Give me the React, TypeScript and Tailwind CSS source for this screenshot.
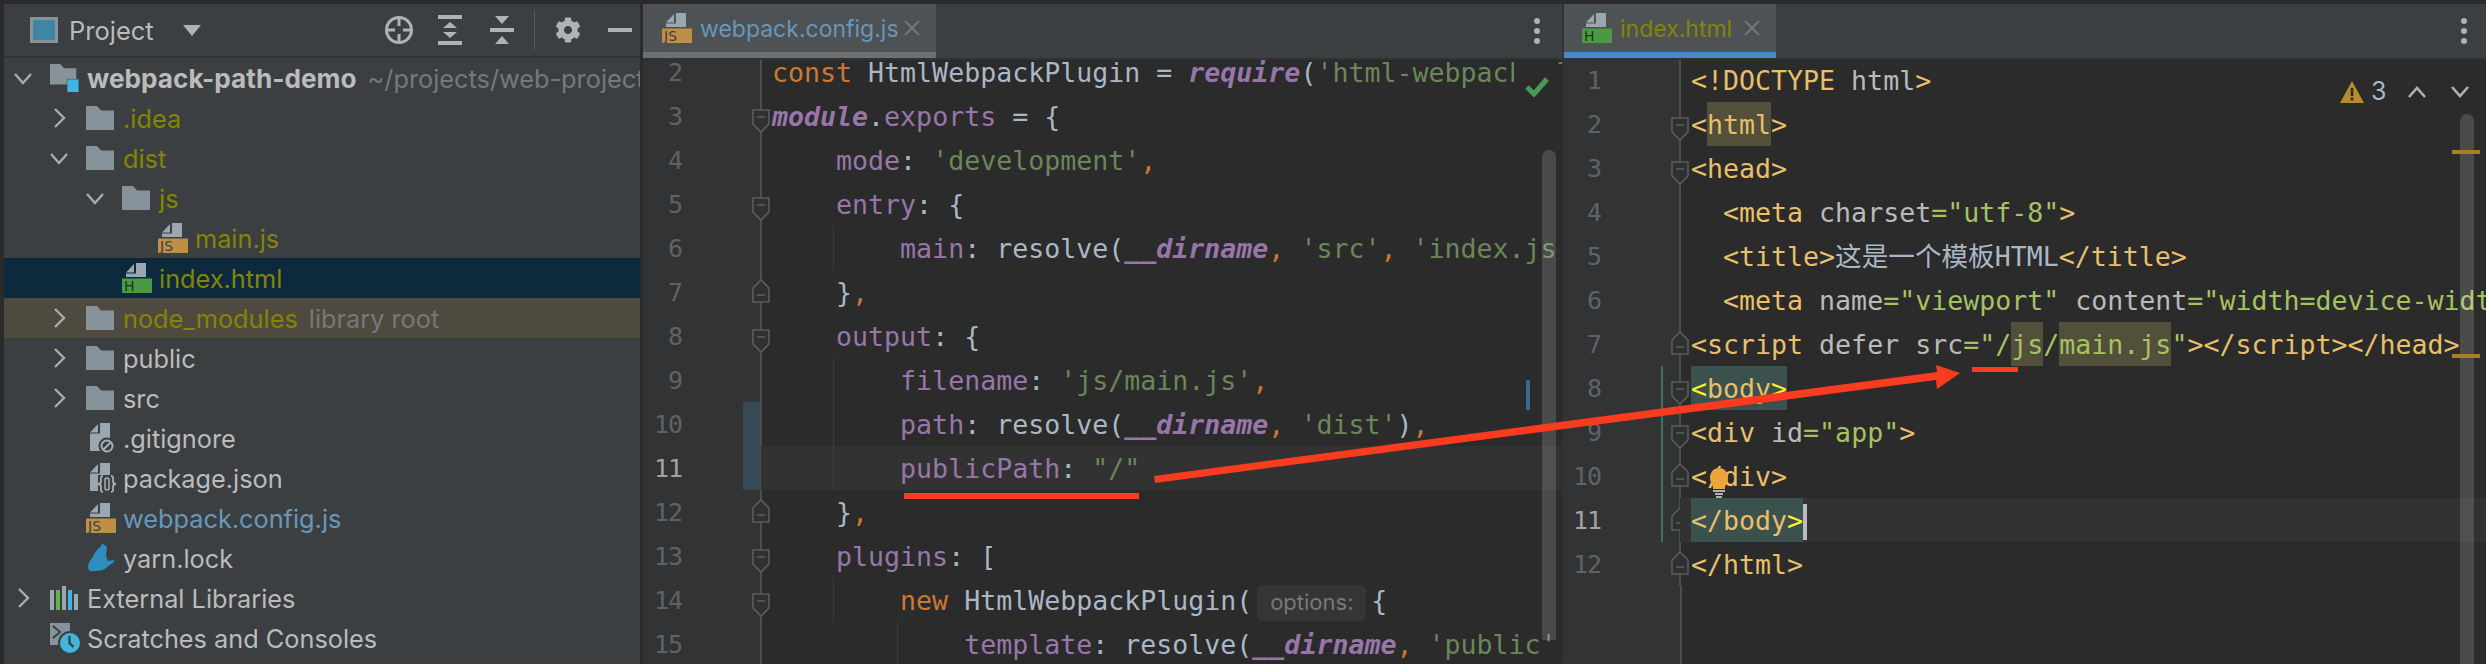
import React from "react";
import { FaCog } from "react-icons/fa";

const MONO = "font-['DejaVu_Sans_Mono','Noto_Sans_CJK_SC',monospace]";
const UI = "font-['Inter','Noto_Sans',sans-serif]";

/* ---------- small icons ---------- */
const Chevron = ({ open, className = "" }: { open: boolean; className?: string }) => (
  <svg width="24" height="24" viewBox="0 0 24 24" className={className} fill="none" stroke="#a9acae" strokeWidth="2.4">
    {open ? <path d="M4 8l8 9 8-9" /> : <path d="M8 3l9 9-9 9" />}
  </svg>
);

const Folder = () => (
  <svg width="30" height="24" viewBox="0 0 30 24" fill="#87939a">
    <path d="M0 0h11l4 4.500h13V24H0z" />
  </svg>
);

const RootFolder = () => (
  <svg width="32" height="30" viewBox="0 0 32 30">
    <path d="M0 0h11l4 4.500h13V22H0z" fill="#87939a" />
    <rect x="18" y="16" width="12" height="14" fill="#3c3f41" />
    <rect x="18.500" y="16.500" width="12" height="13.500" fill="#40b6e0" />
  </svg>
);

const FILE_TOP = "M4 9.500L12 1v8.500zM14 0h10v14H4v-3.500h10z";

const BadgeFile = ({ label, bg, fg }: { label: string; bg: string; fg: string }) => (
  <svg width="30" height="30" viewBox="0 0 30 30">
    <path d={FILE_TOP} fill="#9aa7b0" />
    <rect x="0" y="15.500" width="30" height="14.500" fill={bg} />
    <text x="2" y="28" fontSize="14" fontFamily="'DejaVu Sans',sans-serif" fill={fg}>{label}</text>
  </svg>
);
const JsFile = () => <BadgeFile label="JS" bg="#bf8f47" fg="#3c3f41" />;
const HtmlFile = () => <BadgeFile label="H" bg="#4a9a44" fg="#23301f" />;

const LightFile = () => (
  <path d="M4 9.500L12 1v8.500zM14 0h10v28H4V10.500h10z" fill="#9aa7b0" />
);

const GitIgnore = () => (
  <svg width="30" height="30" viewBox="0 0 30 30">
    <LightFile />
    <circle cx="21" cy="23" r="8.500" fill="#3c3f41" />
    <circle cx="21" cy="23" r="5.500" fill="none" stroke="#a5b0b8" strokeWidth="2" />
    <path d="M17 27l8-8" stroke="#a5b0b8" strokeWidth="2" />
  </svg>
);

const JsonFile = () => (
  <svg width="30" height="30" viewBox="0 0 30 30">
    <LightFile />
    <rect x="12" y="12" width="18" height="18" fill="#3c3f41" />
    <path d="M17 13c-3 0-2 3-2 5 0 2-1 3-3 3 2 0 3 1 3 3 0 2-1 5 2 5M25 13c3 0 2 3 2 5 0 2 1 3 3 3-2 0-3 1-3 3 0 2 1 5-2 5" fill="none" stroke="#a5b0b8" strokeWidth="1.800" />
    <rect x="19" y="15" width="4" height="12" rx="2" fill="none" stroke="#a5b0b8" strokeWidth="1.500" />
  </svg>
);

const Yarn = () => (
  <svg width="30" height="30" viewBox="0 0 30 30">
    <path
      d="M16 0l2 2c2 0 3 2 3 4 0 2-1 3-1 5 0 3 1 5 2 7 2 0 4-1 6-1 1 1 0 2-1 3-3 2-5 3-8 6-2 1-6 2-10 2-4 1-7 0-7-4 0-4 2-6 4-9 2-3 3-6 5-8 2-2 4-3 5-7z"
      fill="#2e8fbf"
    />
  </svg>
);

const Libs = () => (
  <svg width="30" height="24" viewBox="0 0 30 24">
    <rect x="0" y="4" width="4" height="20" fill="#9aa7b0" />
    <rect x="6" y="4" width="4" height="20" fill="#62b543" />
    <rect x="12" y="0" width="4" height="24" fill="#9aa7b0" />
    <rect x="18" y="4" width="4" height="20" fill="#40b6e0" />
    <rect x="24" y="8" width="4" height="16" fill="#9aa7b0" />
  </svg>
);

const Scratches = () => (
  <svg width="30" height="30" viewBox="0 0 30 30">
    <path d="M0 0h20v22H0z" fill="#87939a" />
    <path d="M3 3l7 6-7 6" fill="none" stroke="#3c3f41" strokeWidth="2" />
    <circle cx="20" cy="20" r="12" fill="#3c3f41" />
    <circle cx="20" cy="20" r="10" fill="#40b6e0" />
    <path d="M19.500 13v7l4 4" fill="none" stroke="#3c3f41" strokeWidth="2.400" />
  </svg>
);

const Kebab = () => (
  <div className="flex flex-col gap-[4px]">
    <span className="w-[6px] h-[6px] rounded-full bg-[#afb1b3]" />
    <span className="w-[6px] h-[6px] rounded-full bg-[#afb1b3]" />
    <span className="w-[6px] h-[6px] rounded-full bg-[#afb1b3]" />
  </div>
);

const CloseX = () => (
  <svg width="16" height="14" viewBox="0 0 16 14" stroke="#7c7f81" strokeWidth="1.700">
    <path d="M1 0l14 14M15 0L1 14" />
  </svg>
);

/* fold marks in the gutter */
const FoldOpen = () => (
  <svg width="18" height="24" viewBox="0 0 18 24" fill="#2e3032" stroke="#5a5c5e" strokeWidth="1.600">
    <path d="M1 1h16v14l-8 8-8-8z" />
    <path d="M5 8h8" />
  </svg>
);
const FoldClose = () => (
  <svg width="18" height="24" viewBox="0 0 18 24" fill="#2e3032" stroke="#5a5c5e" strokeWidth="1.600">
    <path d="M1 23V9l8-8 8 8v14z" />
    <path d="M5 16h8" />
  </svg>
);

/* ---------- code tokens ---------- */
type Seg = [string, string];
const P = "text-[#9876aa]";
const BI = "text-[#9876aa] font-bold italic";
const O = "text-[#cc7832]";
const W = "text-[#a9b7c6]";
const G = "text-[#6a8759]";
const T = "text-[#e8bf6a]";
const A = "text-[#bababa]";
const V = "text-[#a5c261]";
const Y = "text-[#ffef28]";

type Line = {
  n: number;
  segs: React.ReactNode;
  fold?: "open" | "close";
  guide?: "a" | "b";
  current?: boolean;
  change?: boolean;
  green?: boolean;
};

const S = (segs: Seg[]) => (
  <>
    {segs.map(([c, t], i) => (
      <span key={i} className={c}>{t}</span>
    ))}
  </>
);

const left: Line[] = [
  { n: 2, segs: S([[O, "const "], [W, "HtmlWebpackPlugin = "], [BI, "require"], [W, "("], [G, "'html-webpack-plugin'"], [W, ")"]]) },
  { n: 3, fold: "open", segs: S([[BI, "module"], [W, "."], [P, "exports"], [W, " = {"]]) },
  { n: 4, segs: S([[W, "    "], [P, "mode"], [W, ": "], [G, "'development'"], [O, ","]]) },
  { n: 5, fold: "open", segs: S([[W, "    "], [P, "entry"], [W, ": {"]]) },
  { n: 6, guide: "a", segs: S([[W, "        "], [P, "main"], [W, ": resolve("], [BI, "__dirname"], [O, ", "], [G, "'src'"], [O, ", "], [G, "'index.js'"], [W, ")"]]) },
  { n: 7, fold: "close", segs: S([[W, "    }"], [O, ","]]) },
  { n: 8, fold: "open", segs: S([[W, "    "], [P, "output"], [W, ": {"]]) },
  { n: 9, guide: "a", segs: S([[W, "        "], [P, "filename"], [W, ": "], [G, "'js/main.js'"], [O, ","]]) },
  { n: 10, guide: "a", change: true, segs: S([[W, "        "], [P, "path"], [W, ": resolve("], [BI, "__dirname"], [O, ", "], [G, "'dist'"], [W, ")"], [O, ","]]) },
  { n: 11, guide: "a", change: true, current: true, segs: S([[W, "        "], [P, "publicPath"], [W, ": "], [G, '"/"']]) },
  { n: 12, fold: "close", segs: S([[W, "    }"], [O, ","]]) },
  { n: 13, fold: "open", segs: S([[W, "    "], [P, "plugins"], [W, ": ["]]) },
  {
    n: 14,
    fold: "open",
    guide: "a",
    segs: (
      <>
        {S([[W, "        "], [O, "new "], [W, "HtmlWebpackPlugin("]])}
        <span className={`${UI} inline-block w-[109px] h-[36px] mx-[5px] rounded-[6px] bg-[#353535] text-[#787878] text-[22px] leading-[34px] text-center align-middle`}>options:</span>
        {S([[W, "{"]])}
      </>
    ),
  },
  { n: 15, guide: "b", segs: S([[W, "            "], [P, "template"], [W, ": resolve("], [BI, "__dirname"], [O, ", "], [G, "'public'"], [O, ","]]) },
];

const right: Line[] = [
  { n: 1, segs: S([[T, "<!DOCTYPE "], [A, "html"], [T, ">"]]) },
  { n: 2, fold: "open", segs: (<>{S([[T, "<"]])}<span className={`${T} bg-[#52503a] inline-block h-[44px]`}>html</span>{S([[T, ">"]])}</>) },
  { n: 3, fold: "open", segs: S([[T, "<head>"]]) },
  { n: 4, segs: S([[T, "  <meta "], [A, "charset"], [V, '="utf-8"'], [T, ">"]]) },
  { n: 5, segs: S([[T, "  <title>"], [W, "这是一个模板HTML"], [T, "</title>"]]) },
  { n: 6, segs: S([[T, "  <meta "], [A, "name"], [V, '="viewport" '], [A, "content"], [V, '="width=device-width, initial-scale=1"'], [T, ">"]]) },
  {
    n: 7,
    fold: "close",
    segs: (
      <>
        {S([[T, "<script "], [A, "defer src"], [V, '="/']])}
        <span className={`${V} bg-[#52503a] inline-block h-[44px]`}>js</span>
        {S([[V, "/"]])}
        <span className={`${V} bg-[#52503a] inline-block h-[44px]`}>main.js</span>
        {S([[V, '"'], [T, "></script></head>"]])}
      </>
    ),
  },
  {
    n: 8,
    fold: "open",
    green: true,
    segs: (
      <span className="bg-[#3b514d] inline-block h-[44px]">{S([[Y, "<"], [T, "body"], [Y, ">"]])}</span>
    ),
  },
  { n: 9, fold: "open", green: true, segs: S([[T, "<div "], [A, "id"], [V, '="app"'], [T, ">"]]) },
  { n: 10, fold: "close", green: true, segs: S([[T, "</div>"]]) },
  {
    n: 11,
    fold: "close",
    green: true,
    current: true,
    segs: (
      <>
        <span className="bg-[#3b514d] inline-block h-[44px]">{S([[T, "</body"], [Y, ">"]])}</span>
        <span className="inline-block w-[4px] h-[36px] bg-[#bbbbbb] align-middle -mt-[2px]" />
      </>
    ),
  },
  { n: 12, fold: "close", segs: S([[T, "</html>"]]) },
];

const EditorLine = ({ l, side }: { l: Line; side: "l" | "r" }) => (
  <div className="flex h-[44px] shrink-0 relative">
    <div className={`${side === "l" ? "w-[39px]" : "w-[37px]"} shrink-0 bg-[#313335] text-right leading-[46px] ${l.current ? "text-[#a4a3a3]" : "text-[#606366]"} ${MONO} text-[25px] tracking-[-1px]`}>
      {l.n}
    </div>
    <div className="w-[79px] shrink-0 relative bg-[#313335]">
      {l.change && <span className="absolute right-0 top-0 bottom-0 w-[18px] bg-[#374955]" />}
      {l.green && <span className="absolute right-[17px] top-0 bottom-0 w-[2px] bg-[#447152]" />}
      <span className="absolute right-[-1px] top-0 bottom-0 w-[2px] bg-[#4c4e50]" />
      {l.fold === "open" && (
        <span className="absolute right-[-9px] top-[15px]"><FoldOpen /></span>
      )}
      {l.fold === "close" && (
        <span className="absolute right-[-9px] top-[9px]"><FoldClose /></span>
      )}
    </div>
    <div
      className={`flex-1 min-w-0 relative whitespace-pre overflow-hidden pl-[11px] leading-[46px] text-[26.6px] ${MONO} ${l.current ? "bg-[#323232]" : ""}`}
    >
      {l.guide === "a" && <span className="absolute left-[72px] top-0 bottom-0 w-[1px] bg-[#3d3d3d]" />}
      {l.guide === "b" && <span className="absolute left-[136px] top-0 bottom-0 w-[1px] bg-[#3d3d3d]" />}
      {l.segs}
    </div>
  </div>
);

const Tab = ({ w, pl, icon, name, cls, bar }: { w: string; pl: string; icon: React.ReactNode; name: string; cls: string; bar: string }) => (
  <div className={`${w} h-[54px] shrink-0 bg-[#4e5254] flex flex-col`}>
    <div className={`flex items-center flex-1 ${pl}`}>
      <span className="w-[30px] h-[30px] mr-[8px]">{icon}</span>
      <span className={`${UI} text-[23px] pt-[2px] ${cls}`}>{name}</span>
      <span className="ml-auto mr-[16px]"><CloseX /></span>
    </div>
    <div className={`h-[6px] ${bar}`} />
  </div>
);

const treeRows: {
  pl: string; chev?: "open" | "closed"; icon: React.ReactNode; label: string; cls: string; extra?: string; bold?: boolean; row?: string;
}[] = [
  { pl: "pl-[7px]", chev: "open", icon: <RootFolder />, label: "webpack-path-demo", cls: "text-[#bbbbbb]", bold: true, extra: "~/projects/web-projects/webpack-path-demo" },
  { pl: "pl-[43px]", chev: "closed", icon: <Folder />, label: ".idea", cls: "text-[#848504]" },
  { pl: "pl-[43px]", chev: "open", icon: <Folder />, label: "dist", cls: "text-[#848504]" },
  { pl: "pl-[79px]", chev: "open", icon: <Folder />, label: "js", cls: "text-[#848504]" },
  { pl: "pl-[115px]", icon: <JsFile />, label: "main.js", cls: "text-[#848504]" },
  { pl: "pl-[79px]", icon: <HtmlFile />, label: "index.html", cls: "text-[#848504]", row: "bg-[#0d293e]" },
  { pl: "pl-[43px]", chev: "closed", icon: <Folder />, label: "node_modules", cls: "text-[#848504]", extra: "library root", row: "bg-[#4e4a40]" },
  { pl: "pl-[43px]", chev: "closed", icon: <Folder />, label: "public", cls: "text-[#bbbbbb]" },
  { pl: "pl-[43px]", chev: "closed", icon: <Folder />, label: "src", cls: "text-[#bbbbbb]" },
  { pl: "pl-[43px]", icon: <GitIgnore />, label: ".gitignore", cls: "text-[#bbbbbb]" },
  { pl: "pl-[43px]", icon: <JsonFile />, label: "package.json", cls: "text-[#bbbbbb]" },
  { pl: "pl-[43px]", icon: <JsFile />, label: "webpack.config.js", cls: "text-[#6897bb]" },
  { pl: "pl-[43px]", icon: <Yarn />, label: "yarn.lock", cls: "text-[#bbbbbb]" },
  { pl: "pl-[7px]", chev: "closed", icon: <Libs />, label: "External Libraries", cls: "text-[#bbbbbb]" },
  { pl: "pl-[7px]", icon: <Scratches />, label: "Scratches and Consoles", cls: "text-[#bbbbbb]" },
];

const Sidebar = () => (
  <aside className={`w-[636px] shrink-0 flex flex-col bg-[#3c3f41] overflow-hidden ${UI}`}>
    <header className="h-[52px] shrink-0 flex items-center relative">
      <span className="ml-[26px] w-[28px] h-[26px] border-[3px] border-[#8c9296] bg-[#3f86a3] shrink-0" />
      <span className="ml-[11px] pt-[2px] text-[25.500px] text-[#bbbbbb]">Project</span>
      <svg className="ml-[29px]" width="18" height="11" viewBox="0 0 18 11" fill="#afb1b3"><path d="M0 0h18l-9 11z" /></svg>
      <div className="ml-auto flex items-center pr-[8px]">
        <svg width="30" height="34" viewBox="0 0 30 34" fill="none" stroke="#b0b2b4" strokeWidth="3">
          <circle cx="15" cy="17" r="12.500" />
          <path d="M15 4v9M15 21v9M2 17h9M19 17h9" />
        </svg>
        <svg className="ml-[24px]" width="24" height="34" viewBox="0 0 24 34" fill="#b0b2b4">
          <path d="M0 2h24v4H0zM0 28h24v4H0zM12 9l7 6H5zM12 25l-7-6h14z" />
        </svg>
        <svg className="ml-[28px]" width="24" height="34" viewBox="0 0 24 34" fill="#b0b2b4">
          <path d="M0 15h24v4H0zM5 3h14l-7 8zM5 31h14l-7-8z" />
        </svg>
        <span className="ml-[20px] w-[1px] h-[40px] bg-[#55585a]" />
        <FaCog className="ml-[20px]" size={26} color="#afb1b3" />
        <span className="ml-[27px] w-[24px] h-[4px] bg-[#afb1b3]" />
      </div>
    </header>
    <div className="h-[2px] shrink-0 bg-[#323232]" />
    <div className="flex flex-col">
      {treeRows.map((r) => (
        <div key={r.label} className={`h-[40px] shrink-0 flex items-center whitespace-nowrap ${r.pl} ${r.row ?? ""}`}>
          <span className="w-[24px] h-[24px] mr-[15px] shrink-0">
            {r.chev && <Chevron open={r.chev === "open"} />}
          </span>
          <span className="w-[30px] h-[32px] mr-[7px] shrink-0 flex items-center">{r.icon}</span>
          <span className={`pt-[2px] ${r.bold ? "text-[26.200px] font-bold" : "text-[25.300px]"} ${r.cls}`}>{r.label}</span>
          {r.extra && <span className="ml-[11px] pt-[2px] text-[25.300px] text-[#787878]">{r.extra}</span>}
        </div>
      ))}
    </div>
  </aside>
);

export default function App() {
  return (
    <div className="relative w-[2486px] h-[664px] overflow-hidden bg-[#2b2b2b] flex pt-[4px] pl-[4px]">
      <Sidebar />
      <div className="w-[3px] shrink-0 bg-[#2b2b2b]" />
      {/* left editor */}
      <section className="w-[919px] shrink-0 flex flex-col relative overflow-hidden">
        <div className="h-[54px] shrink-0 flex items-center bg-[#3c3f41] relative z-10 shadow-[0_2px_0_#323232]">
          <Tab w="w-[293px]" pl="pl-[19px]" icon={<JsFile />} name="webpack.config.js" cls="text-[#6897bb]" bar="bg-[#6e7174]" />
          <span className="ml-auto mr-[22px]"><Kebab /></span>
        </div>
        <div className="flex flex-col -mt-[8px] bg-[#2b2b2b] relative">
          {left.map((l) => <EditorLine key={l.n} l={l} side="l" />)}
          <span className="absolute left-[871px] top-[8px] w-[42px] h-[44px] bg-[#2b2b2b]" />
          <svg className="absolute left-[882px] top-[27px]" width="24" height="20" viewBox="0 0 24 20" fill="none" stroke="#499c54" strokeWidth="5"><path d="M2 10l7 7L22 2" /></svg>
          <span className="absolute left-[899px] top-[100px] w-[14px] h-[490px] rounded-t-[7px] bg-white/15" />
          <span className="absolute left-[883px] top-[330px] w-[4px] h-[30px] bg-[#38678f]" />
        </div>
      </section>
      <div className="w-[2px] shrink-0 bg-[#323232]" />
      {/* right editor */}
      <section className="flex-1 min-w-0 flex flex-col relative overflow-hidden">
        <div className="h-[54px] shrink-0 flex items-center bg-[#3c3f41] relative z-10 shadow-[0_2px_0_#323232]">
          <Tab w="w-[212px]" pl="pl-[18px]" icon={<HtmlFile />} name="index.html" cls="text-[#848504]" bar="bg-[#4a88c7]" />
          <span className="ml-auto mr-[19px]"><Kebab /></span>
        </div>
        <div className="flex flex-col bg-[#2b2b2b] relative flex-1">
          {right.map((l) => <EditorLine key={l.n} l={l} side="r" />)}
          <div className="flex-1 flex">
            <div className="w-[116px] bg-[#313335] border-r-[2px] border-[#4c4e50] box-content -mr-[1px]" />
          </div>
        </div>
        <span className="absolute left-[896px] top-[110px] bottom-0 w-[14px] rounded-t-[7px] bg-white/15" />
        <span className="absolute left-[888px] top-[146px] w-[28px] h-[4px] bg-[#a67f26]" />
        <span className="absolute left-[888px] top-[350px] w-[28px] h-[4px] bg-[#a67f26]" />
        <div className="absolute left-[776px] top-[69px] flex items-center">
          <svg width="24" height="22" viewBox="0 0 24 22"><path d="M12 0l12 22H0z" fill="#b98b2a" /><path d="M10.700 7h2.600v8h-2.600zM10.700 16.500h2.600v3h-2.600z" fill="#2b2b2b" /></svg>
          <span className={`ml-[7px] text-[25px] text-[#a9b7c6] ${UI}`}>3</span>
          <svg className="ml-[22px]" width="18" height="12" viewBox="0 0 18 12" fill="none" stroke="#afb1b3" strokeWidth="2.600"><path d="M1 11l8-9 8 9" /></svg>
          <svg className="ml-[25px]" width="18" height="12" viewBox="0 0 18 12" fill="none" stroke="#afb1b3" strokeWidth="2.600"><path d="M1 1l8 9 8-9" /></svg>
        </div>
        {/* light bulb */}
        <svg className="absolute left-[145px] top-[464px]" width="20" height="30" viewBox="0 0 20 30">
          <path d="M10 0c5 0 9 4 9 10 0 4-2 6-3 9v2H4v-2C3 16 1 14 1 10 1 4 5 0 10 0z" fill="#eda43c" />
          <path d="M4 23h12M6 26h8M7 29h6" stroke="#afb1b3" strokeWidth="2" />
        </svg>
      </section>
      {/* hand-drawn annotation over the whole picture */}
      <svg className="absolute inset-0 pointer-events-none" width="2486" height="664" viewBox="0 0 2486 664">
        <path d="M904 493h235v6H904zM1972 367h46v5h-46z" fill="#f93c20" />
        <path d="M1154 476L1937 372l-1-7 24 8-23 16-1-9L1155 483z" fill="#f93c20" />
      </svg>
    </div>
  );
}
